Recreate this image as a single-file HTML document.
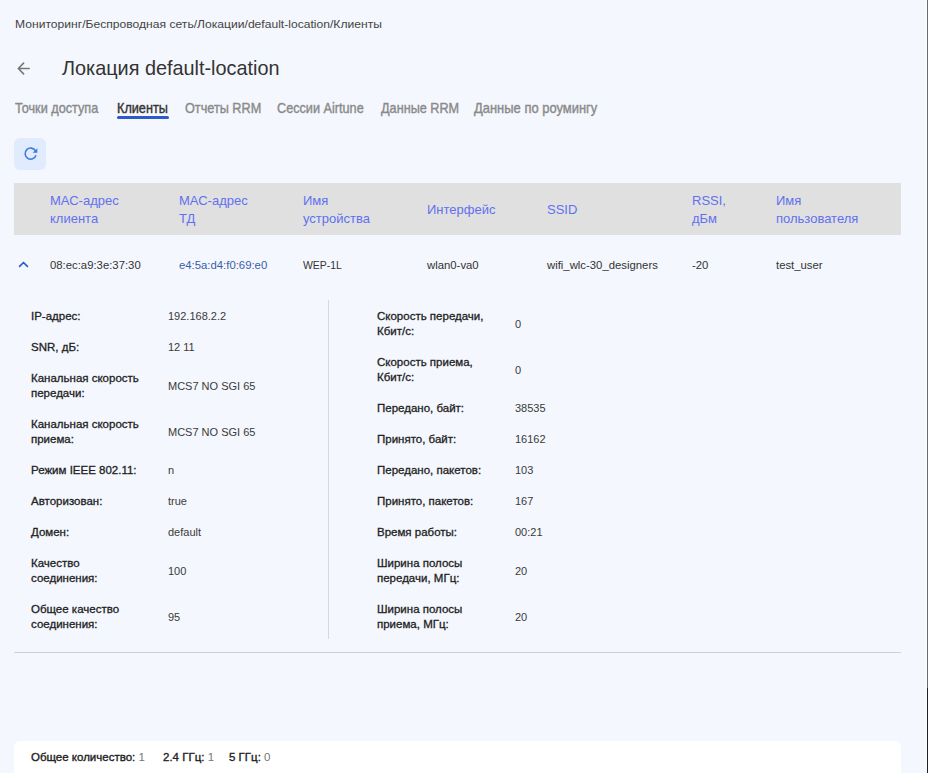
<!DOCTYPE html>
<html><head><meta charset="utf-8">
<style>
*{box-sizing:border-box;margin:0;padding:0}
html,body{width:928px;height:773px;overflow:hidden;background:#f4f7fd;font-family:"Liberation Sans",sans-serif;color:#333}
.abs{position:absolute;white-space:nowrap}
#edge0{position:absolute;left:926px;top:0;width:1px;height:773px;background:#fafcff}
#edge{position:absolute;left:927px;top:0;width:1px;height:773px;background:#6a6a6a}
#edge2{position:absolute;left:927px;top:688px;width:1px;height:85px;background:#1a211e}
#crumb{left:15px;top:17px;font-size:11.5px;line-height:15px;color:#444;transform:scaleX(1.053);transform-origin:0 0}
#back{position:absolute;left:15px;top:60px}
#title{left:62px;top:57px;font-size:19.85px;line-height:23px;color:#333}
.tab{position:absolute;top:99px;font-size:14.5px;line-height:17px;color:#8a8a8a;-webkit-text-stroke:0.4px #8a8a8a;white-space:nowrap;transform:translateY(.7px) scaleX(.874);transform-origin:0 0}
.tab.act{-webkit-text-stroke-color:#333}
.tab.act{color:#333}
#uline{position:absolute;left:117px;top:116px;width:52px;height:3px;border-radius:2px;background:#2f58c9}
#refresh{position:absolute;left:14px;top:138px;width:32px;height:32px;border-radius:6px;background:#e0ebfd}
#thead{position:absolute;left:14px;top:183px;width:887px;height:52px;background:#e0e0e0}
.th{position:absolute;margin-top:1px;font-size:13px;line-height:18px;color:#6270f0;white-space:nowrap}
.td{position:absolute;top:258px;font-size:11px;line-height:15px;color:#333;white-space:nowrap;transform:scaleX(1.03);transform-origin:0 0}
.lbl{position:absolute;font-size:11.5px;line-height:15px;color:#222;-webkit-text-stroke:0.3px #222;white-space:nowrap}
.val{position:absolute;font-size:11px;line-height:15px;color:#3a3a3a;white-space:nowrap}
#vdiv{position:absolute;left:328px;top:300px;width:1px;height:339px;background:#d8d8d8}
#hr{position:absolute;left:14px;top:652px;width:887px;height:1px;background:#d0d0d0}
#footer{position:absolute;left:14px;top:741px;width:887px;height:40px;border-radius:6px;background:#fff}
.fl{position:absolute;top:750px;font-size:11.5px;line-height:15px;white-space:nowrap}
.fl b{color:#222;font-weight:normal;-webkit-text-stroke:0.35px #222}
.fl span{color:#777}
</style></head><body>
<div id="edge0"></div><div id="edge"></div><div id="edge2"></div>
<div id="crumb" class="abs">Мониторинг/Беспроводная сеть/Локации/default-location/Клиенты</div>
<svg id="back" width="18" height="18" viewBox="0 0 18 18"><path d="M14.2 8.5H3.6M8.6 3.1L3.3 8.5L8.6 13.9" fill="none" stroke="#777" stroke-width="1.6" stroke-linecap="round" stroke-linejoin="round"/></svg>
<div id="title" class="abs">Локация default-location</div>

<div class="tab" style="left:15px">Точки доступа</div>
<div class="tab act" style="left:117px">Клиенты</div>
<div class="tab" style="left:185px">Отчеты RRM</div>
<div class="tab" style="left:277px">Сессии Airtune</div>
<div class="tab" style="left:381px">Данные RRM</div>
<div class="tab" style="left:474px;transform:translateY(.7px) scaleX(.893)">Данные по роумингу</div>
<div id="uline"></div>

<div id="refresh"><svg style="position:absolute;left:6.6px;top:5.9px" width="19" height="19" viewBox="0 0 24 24"><path d="M18.9 14.2A7 7 0 1 1 18.3 8.7" fill="none" stroke="#4279dc" stroke-width="2"/><path d="M20.6 5.4V11.2H14.8z" fill="#4279dc"/></svg></div>

<div id="thead"></div>
<div class="th" style="left:50px;top:191px">МАС-адрес<br>клиента</div>
<div class="th" style="left:179px;top:191px">МАС-адрес<br>ТД</div>
<div class="th" style="left:303px;top:191px">Имя<br>устройства</div>
<div class="th" style="left:427px;top:200px">Интерфейс</div>
<div class="th" style="left:547px;top:200px">SSID</div>
<div class="th" style="left:692px;top:191px">RSSI,<br>дБм</div>
<div class="th" style="left:776px;top:191px">Имя<br>пользователя</div>

<svg style="position:absolute;left:18px;top:259px" width="11" height="10" viewBox="0 0 11 10"><path d="M1.6 7.3L5.5 3.5L9.4 7.3" fill="none" stroke="#2c5ccc" stroke-width="1.7" stroke-linecap="round" stroke-linejoin="round"/></svg>
<div class="td" style="left:50px">08:ec:a9:3e:37:30</div>
<div class="td" style="left:179px;color:#3a5dab">e4:5a:d4:f0:69:e0</div>
<div class="td" style="left:303px;transform:scaleX(.95)">WEP-1L</div>
<div class="td" style="left:427px">wlan0-va0</div>
<div class="td" style="left:547px">wifi_wlc-30_designers</div>
<div class="td" style="left:692px">-20</div>
<div class="td" style="left:776px">test_user</div>

<div id="vdiv"></div>
<!-- left column -->
<div class="lbl" style="left:31px;top:309px">IP-адрес:</div><div class="val" style="left:168px;top:309px">192.168.2.2</div>
<div class="lbl" style="left:31px;top:340px">SNR, дБ:</div><div class="val" style="left:168px;top:340px">12 11</div>
<div class="lbl" style="left:31px;top:371px">Канальная скорость<br>передачи:</div><div class="val" style="left:168px;top:379px">MCS7 NO SGI 65</div>
<div class="lbl" style="left:31px;top:417px">Канальная скорость<br>приема:</div><div class="val" style="left:168px;top:425px">MCS7 NO SGI 65</div>
<div class="lbl" style="left:31px;top:463px">Режим IEEE 802.11:</div><div class="val" style="left:168px;top:463px">n</div>
<div class="lbl" style="left:31px;top:494px">Авторизован:</div><div class="val" style="left:168px;top:494px">true</div>
<div class="lbl" style="left:31px;top:525px">Домен:</div><div class="val" style="left:168px;top:525px">default</div>
<div class="lbl" style="left:31px;top:556px">Качество<br>соединения:</div><div class="val" style="left:168px;top:564px">100</div>
<div class="lbl" style="left:31px;top:602px">Общее качество<br>соединения:</div><div class="val" style="left:168px;top:610px">95</div>
<!-- right column -->
<div class="lbl" style="left:377px;top:309px">Скорость передачи,<br>Кбит/с:</div><div class="val" style="left:515px;top:317px">0</div>
<div class="lbl" style="left:377px;top:355px">Скорость приема,<br>Кбит/с:</div><div class="val" style="left:515px;top:363px">0</div>
<div class="lbl" style="left:377px;top:401px">Передано, байт:</div><div class="val" style="left:515px;top:401px">38535</div>
<div class="lbl" style="left:377px;top:432px">Принято, байт:</div><div class="val" style="left:515px;top:432px">16162</div>
<div class="lbl" style="left:377px;top:463px">Передано, пакетов:</div><div class="val" style="left:515px;top:463px">103</div>
<div class="lbl" style="left:377px;top:494px">Принято, пакетов:</div><div class="val" style="left:515px;top:494px">167</div>
<div class="lbl" style="left:377px;top:525px">Время работы:</div><div class="val" style="left:515px;top:525px">00:21</div>
<div class="lbl" style="left:377px;top:556px">Ширина полосы<br>передачи, МГц:</div><div class="val" style="left:515px;top:564px">20</div>
<div class="lbl" style="left:377px;top:602px">Ширина полосы<br>приема, МГц:</div><div class="val" style="left:515px;top:610px">20</div>

<div id="hr"></div>
<div id="footer"></div>
<div class="fl" style="left:31px"><b>Общее количество:</b> <span>1</span></div>
<div class="fl" style="left:163px"><b>2.4 ГГц:</b> <span>1</span></div>
<div class="fl" style="left:229px"><b>5 ГГц:</b> <span>0</span></div>
</body></html>
